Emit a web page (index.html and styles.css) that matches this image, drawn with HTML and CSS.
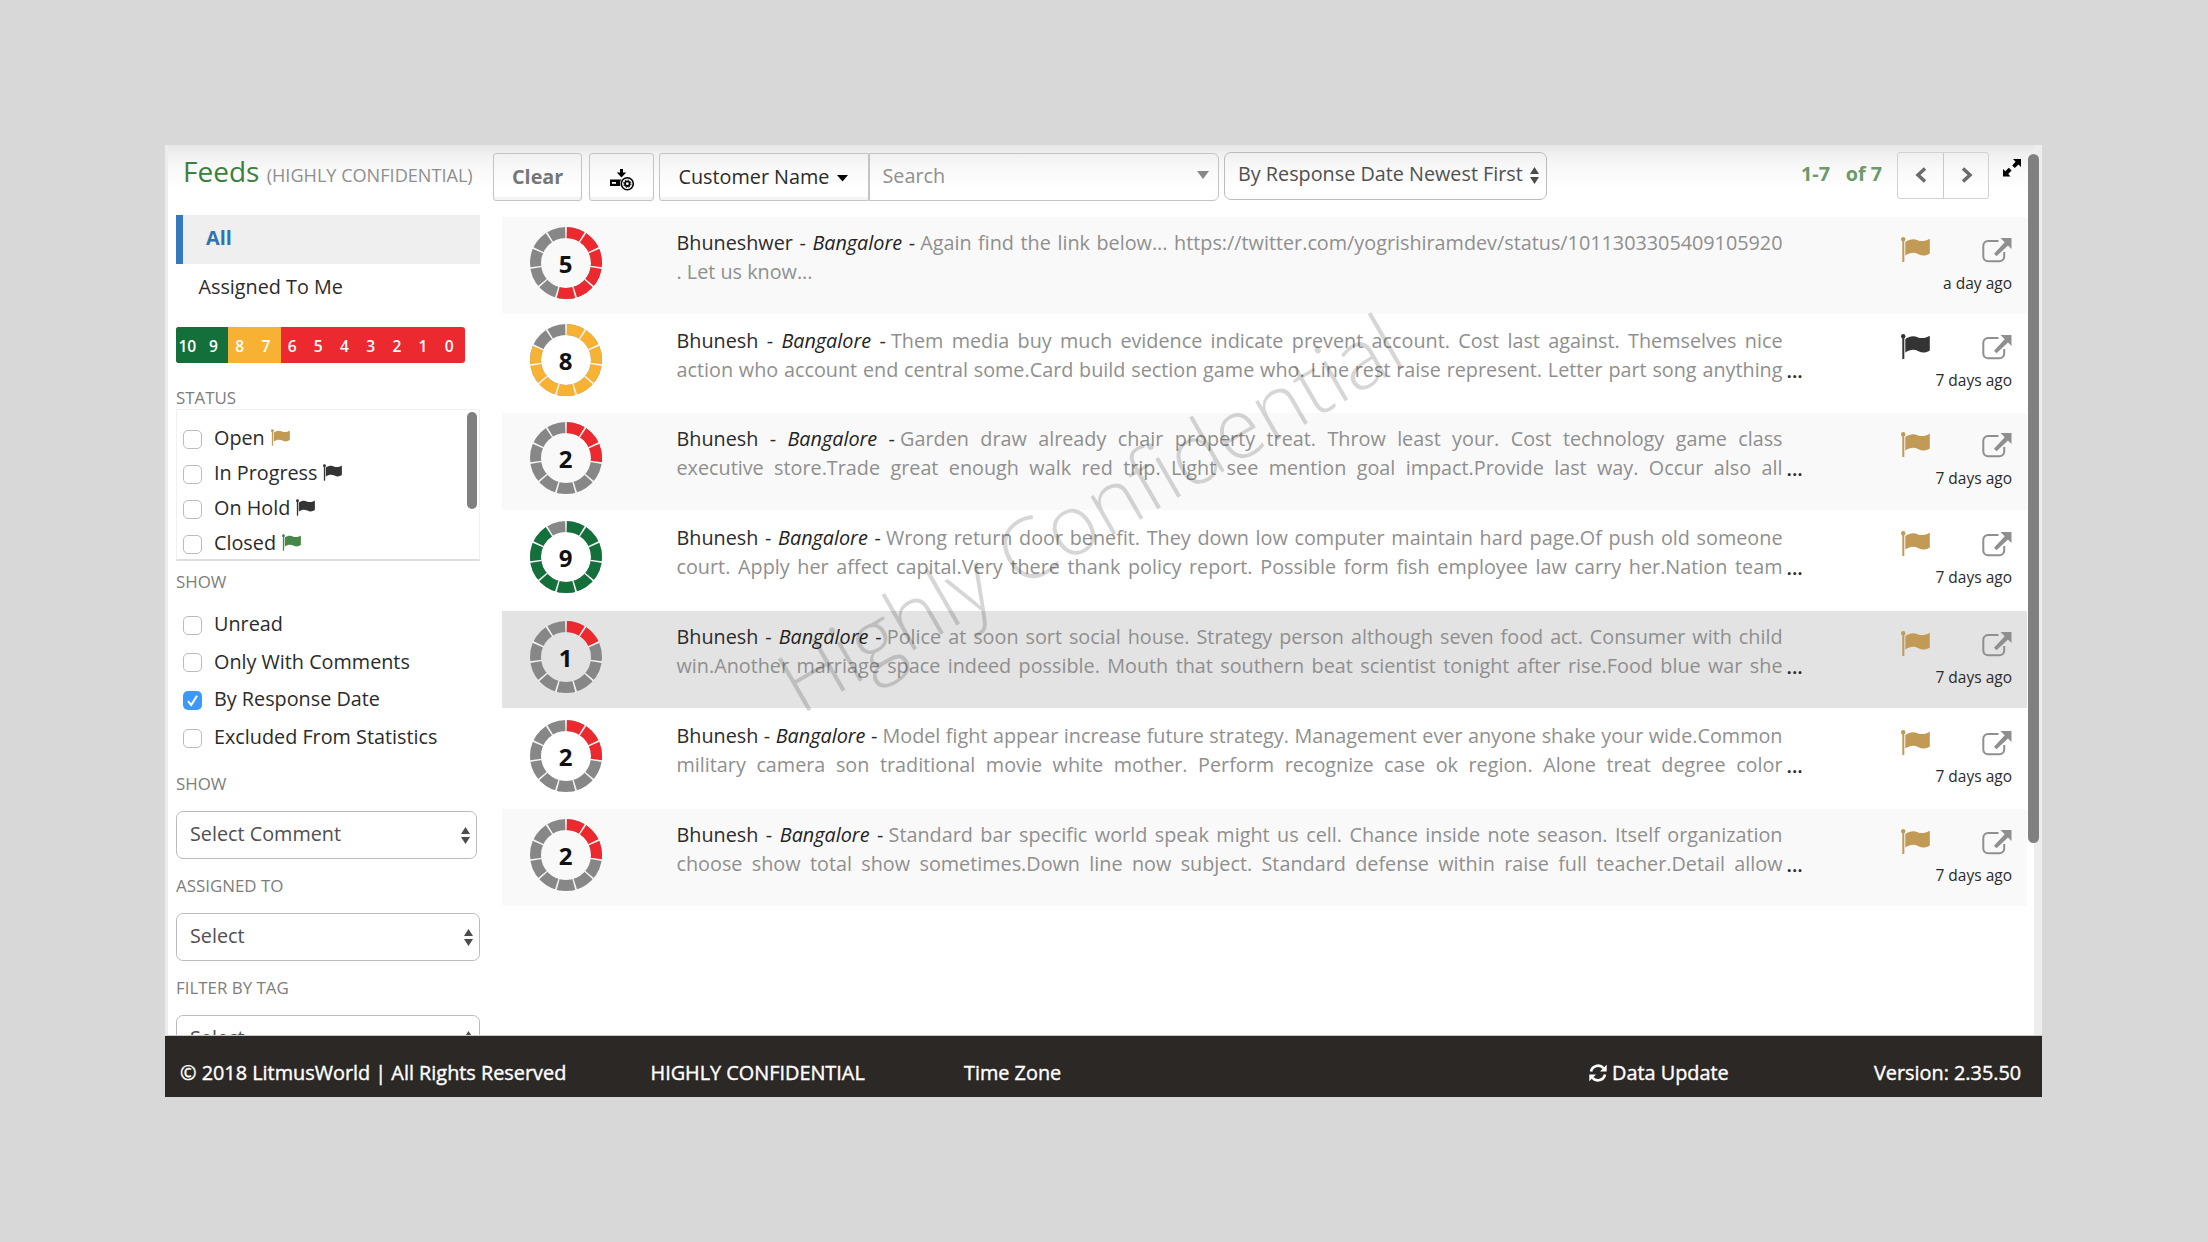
FILE: index.html
```
<!DOCTYPE html>
<html lang="en">
<head>
<meta charset="utf-8">
<title>Feeds</title>
<link rel="stylesheet" href="styles.css">
</head>
<body>
<svg class="defs" width="0" height="0">
  <symbol id="flag" viewBox="0 0 29 25">
    <circle cx="2.2" cy="2.2" r="2.2"/><rect x="1.3" y="2" width="2" height="23"/>
    <path d="M4.3 5C9 1.6 13 1.6 16.500 3.200C20.500 4.800 24.500 4.200 28.800 1.700V16.500C24.500 19.200 21 19 17.500 17.200C13 15 9 15.400 4.300 18.600Z"/>
  </symbol>
  <symbol id="open" viewBox="0 0 30 26">
    <path d="M16.500 4H6A4.700 4.700 0 0 0 1.300 8.700V19.500A4.700 4.700 0 0 0 6 24.200H17.500A4.700 4.700 0 0 0 22.200 19.500V15" fill="none" stroke="currentColor" stroke-width="2"/>
    <path d="M18.500 1H29.500V12L26 8.600L14.500 19.200L12 16.700L22.700 5.300Z"/>
  </symbol>
  <symbol id="updown" viewBox="0 0 9 17">
    <path d="M4.500 0L9 7H0ZM4.500 17L0 10H9Z"/>
  </symbol>
  <symbol id="ring" viewBox="0 0 72 72">
    <circle class="seg-gap" cx="36" cy="36" r="30.500" pathLength="11"/>
  </symbol>
</svg>

<div class="app">
  <div class="content">
    <aside class="sidebar">
      <h1 class="title">Feeds <small>(HIGHLY CONFIDENTIAL)</small></h1>
      <div class="nav-item active">All</div>
      <div class="nav-item">Assigned To Me</div>
      <div class="scores">
        <span class="green">10</span><span class="green">9</span><span class="amber">8</span><span class="amber">7</span><span>6</span><span>5</span><span>4</span><span>3</span><span>2</span><span>1</span><span>0</span>
      </div>

      <div class="label status-label">STATUS</div>
      <div class="status-box">
        <label class="check"><i class="box"></i><span>Open</span><svg class="flag-s tan"><use href="#flag"/></svg></label>
        <label class="check"><i class="box"></i><span>In Progress</span><svg class="flag-s dark"><use href="#flag"/></svg></label>
        <label class="check"><i class="box"></i><span>On Hold</span><svg class="flag-s dark"><use href="#flag"/></svg></label>
        <label class="check"><i class="box"></i><span>Closed</span><svg class="flag-s leaf"><use href="#flag"/></svg></label>
        <div class="status-thumb"></div>
      </div>

      <div class="label show-label">SHOW</div>
      <div class="show-list">
        <label class="check"><i class="box"></i><span>Unread</span></label>
        <label class="check"><i class="box"></i><span>Only With Comments</span></label>
        <label class="check"><i class="box on"><svg viewBox="0 0 19 19"><path d="M5 10.200L8.200 14L14 4.800" fill="none" stroke="#fff" stroke-width="2"/></svg></i><span>By Response Date</span></label>
        <label class="check"><i class="box"></i><span>Excluded From Statistics</span></label>
      </div>

      <div class="label">SHOW</div>
      <div class="select short">Select Comment<svg class="updown"><use href="#updown"/></svg></div>
      <div class="label">ASSIGNED TO</div>
      <div class="select">Select<svg class="updown"><use href="#updown"/></svg></div>
      <div class="label">FILTER BY TAG</div>
      <div class="select">Select<svg class="updown"><use href="#updown"/></svg></div>
    </aside>

    <main class="main">
      <div class="tools">
        <div class="btn clear">Clear</div>
        <div class="btn export">
          <svg width="25" height="22" viewBox="0 0 25 22">
            <path d="M10 0H13V3.500H16.200L11.500 8.500L6.800 3.500H10Z"/>
            <path d="M0 10.500H14V17H0Z"/>
            <rect x="2" y="13" width="4" height="1.800" fill="#fff"/>
            <circle cx="17.300" cy="14.700" r="7.400" fill="#fff"/>
            <circle cx="17.300" cy="14.700" r="6" fill="none" stroke="#000" stroke-width="1.600"/>
            <circle cx="17.300" cy="14.700" r="2.300" fill="none" stroke="#000" stroke-width="1.800"/>
            <circle cx="17.300" cy="14.700" r="3.700" fill="none" stroke="#000" stroke-width="1" stroke-dasharray="1.500 1.400"/>
          </svg>
        </div>
        <div class="btn field">Customer Name<svg width="11" height="7"><path d="M0 0H11L5.500 6.500Z"/></svg></div>
        <div class="search">Search<svg width="12" height="8"><path d="M0 0H12L6 8Z"/></svg></div>
        <div class="select sort">By Response Date Newest First<svg class="updown"><use href="#updown"/></svg></div>
        <div class="range"><span>1-7</span><span>of 7</span></div>
        <div class="pager">
          <span><svg width="12" height="16"><path d="M10 1.500L3 8L10 14.500"/></svg></span>
          <span><svg width="12" height="16"><path d="M2 1.500L9 8L2 14.500"/></svg></span>
        </div>
        <svg class="expand" width="20" height="20" viewBox="0 0 20 20">
          <path d="M11 1H19V9L16.500 6.500L12.800 10L10.200 7.400L13.600 3.700Z"/>
          <path d="M8.500 18.500H1V11L3.300 13.200L6.800 9.800L9.600 12.500L6.200 16.100Z"/>
        </svg>
      </div>

      <div class="list">
        <article class="row">
          <div class="score red"><svg><circle cx="36" cy="36" r="30.5"/><circle class="fill" cx="36" cy="36" r="30.5" pathLength="11" stroke-dasharray="6 11"/><use href="#ring"/></svg><b>5</b></div>
          <div class="text"><p>Bhuneshwer - <em>Bangalore</em> -<q class="lead">Again find the link below... https://twitter.com/yogrishiramdev/status/1011303305409105920</q></p><p class="end"><q>. Let us know...</q></p></div>
          <div class="meta"><div><svg class="flag tan"><use href="#flag"/></svg><svg class="open"><use href="#open"/></svg></div><time>a day ago</time></div>
        </article>
        <article class="row">
          <div class="score amber-ring"><svg><circle cx="36" cy="36" r="30.5"/><circle class="fill" cx="36" cy="36" r="30.5" pathLength="11" stroke-dasharray="9 11"/><use href="#ring"/></svg><b>8</b></div>
          <div class="text"><p>Bhunesh - <em>Bangalore</em> -<q class="lead">Them media buy much evidence indicate prevent account. Cost last against. Themselves nice</q></p><p><q>action who account end central some.Card build section game who. Line rest raise represent. Letter part song anything</q></p><span class="more">...</span></div>
          <div class="meta"><div><svg class="flag dark"><use href="#flag"/></svg><svg class="open"><use href="#open"/></svg></div><time>7 days ago</time></div>
        </article>
        <article class="row">
          <div class="score red"><svg><circle cx="36" cy="36" r="30.5"/><circle class="fill" cx="36" cy="36" r="30.5" pathLength="11" stroke-dasharray="3 11"/><use href="#ring"/></svg><b>2</b></div>
          <div class="text"><p>Bhunesh - <em>Bangalore</em> -<q class="lead">Garden draw already chair property treat. Throw least your. Cost technology game class</q></p><p><q>executive store.Trade great enough walk red trip. Light see mention goal impact.Provide last way. Occur also all</q></p><span class="more">...</span></div>
          <div class="meta"><div><svg class="flag tan"><use href="#flag"/></svg><svg class="open"><use href="#open"/></svg></div><time>7 days ago</time></div>
        </article>
        <article class="row">
          <div class="score green-ring"><svg><circle cx="36" cy="36" r="30.5"/><circle class="fill" cx="36" cy="36" r="30.5" pathLength="11" stroke-dasharray="10 11"/><use href="#ring"/></svg><b>9</b></div>
          <div class="text"><p>Bhunesh - <em>Bangalore</em> -<q class="lead">Wrong return door benefit. They down low computer maintain hard page.Of push old someone</q></p><p><q>court. Apply her affect capital.Very there thank policy report. Possible form fish employee law carry her.Nation team</q></p><span class="more">...</span></div>
          <div class="meta"><div><svg class="flag tan"><use href="#flag"/></svg><svg class="open"><use href="#open"/></svg></div><time>7 days ago</time></div>
        </article>
        <article class="row selected">
          <div class="score red"><svg><circle cx="36" cy="36" r="30.5"/><circle class="fill" cx="36" cy="36" r="30.5" pathLength="11" stroke-dasharray="2 11"/><use href="#ring"/></svg><b>1</b></div>
          <div class="text"><p>Bhunesh - <em>Bangalore</em> -<q class="lead">Police at soon sort social house. Strategy person although seven food act. Consumer with child</q></p><p><q>win.Another marriage space indeed possible. Mouth that southern beat scientist tonight after rise.Food blue war she</q></p><span class="more">...</span></div>
          <div class="meta"><div><svg class="flag tan"><use href="#flag"/></svg><svg class="open"><use href="#open"/></svg></div><time>7 days ago</time></div>
        </article>
        <article class="row">
          <div class="score red"><svg><circle cx="36" cy="36" r="30.5"/><circle class="fill" cx="36" cy="36" r="30.5" pathLength="11" stroke-dasharray="3 11"/><use href="#ring"/></svg><b>2</b></div>
          <div class="text"><p>Bhunesh - <em>Bangalore</em> -<q class="lead">Model fight appear increase future strategy. Management ever anyone shake your wide.Common</q></p><p><q>military camera son traditional movie white mother. Perform recognize case ok region. Alone treat degree color</q></p><span class="more">...</span></div>
          <div class="meta"><div><svg class="flag tan"><use href="#flag"/></svg><svg class="open"><use href="#open"/></svg></div><time>7 days ago</time></div>
        </article>
        <article class="row">
          <div class="score red"><svg><circle cx="36" cy="36" r="30.5"/><circle class="fill" cx="36" cy="36" r="30.5" pathLength="11" stroke-dasharray="3 11"/><use href="#ring"/></svg><b>2</b></div>
          <div class="text"><p>Bhunesh - <em>Bangalore</em> -<q class="lead">Standard bar specific world speak might us cell. Chance inside note season. Itself organization</q></p><p><q>choose show total show sometimes.Down line now subject. Standard defense within raise full teacher.Detail allow</q></p><span class="more">...</span></div>
          <div class="meta"><div><svg class="flag tan"><use href="#flag"/></svg><svg class="open"><use href="#open"/></svg></div><time>7 days ago</time></div>
        </article>
      </div>
    </main>
    <div class="track"></div>
    <div class="thumb"></div>
    <div class="watermark">Highly Confidential</div>
  </div>

  <footer class="footer">
    <span class="copy">© 2018 LitmusWorld | All Rights Reserved</span>
    <span class="secret">HIGHLY CONFIDENTIAL</span>
    <span class="zone">Time Zone</span>
    <span class="update"><svg width="18" height="18" viewBox="0 0 18 18"><path d="M2 7.500A7.200 7.200 0 0 1 14.500 4.200M16 10.500A7.200 7.200 0 0 1 3.500 13.800" fill="none" stroke="#fff" stroke-width="2.700"/><path d="M17.700 .8V7.500H11ZM.3 17.200V10.500H7Z" fill="#fff"/></svg>Data Update</span>
    <span class="version">Version: 2.35.50</span>
  </footer>
</div>
</body>
</html>
```

FILE: styles.css
```
* { box-sizing: border-box; }
body {
  margin: 0;
  padding: 145px 0 0 165px;
  height: 1242px;
  overflow: hidden;
  background: #d8d8d8;
  font: 19.8px "Open Sans", "Noto Sans", sans-serif;
  color: #2b2b2b;
}
.defs { position: absolute; }
.app { width: 1877px; height: 952px; display: flex; flex-direction: column; }
.content {
  position: relative;
  height: 891px;
  display: flex;
  overflow: hidden;
  border-left: 3px solid #ececec;
  border-bottom: 1px solid #c4cac8;
  background: linear-gradient(#e6e6e6, #f1f1f1 10px, #fafafa 26px, #fff 46px);
}

/* Sidebar */
.sidebar { width: 312px; padding-left: 8px; flex: none; }
.title {
  margin: 0; padding: 6px 0 0 7px; height: 70px;
  font-size: 28px; font-weight: 400; line-height: 40px; color: #3c803d; white-space: nowrap;
}
.title small { font-size: 18.1px; color: #8f8f8f; }
.nav-item { height: 62.5px; padding: 9px 0 0 22.500px; line-height: 27px; }
.nav-item.active {
  height: 49px; padding: 9px 0 0 23px;
  border-left: 7px solid #3478c0; background: #efefef;
  font-weight: 700; color: #3073b1;
}
.scores {
  display: flex; width: 289px; height: 36px; border-radius: 3px; overflow: hidden;
  background: #eb292f; color: #fff; font-size: 15.6px; font-weight: 600; line-height: 38px;
}
.scores span { width: 26.2px; padding-right: 3.500px; text-align: center; flex: none; }
.scores .green { background: #14703b; }
.scores .amber { background: #f8b233; }
.label { margin-top: 16px; line-height: 22px; font-size: 16.900px; color: #7d7d7d; }
.status-label { margin-top: 24px; }
.show-label { margin-top: 10px; }
.status-box {
  position: relative; height: 152.500px; padding: 12px 0 0 7px; overflow: hidden;
  border: 1px solid #f0f0f0; border-bottom: 2px solid #dedede;
}
.status-thumb {
  position: absolute; top: 2px; right: 2px; width: 10.500px; height: 97.500px;
  border-radius: 5px; background: #808080;
}
.check { display: flex; align-items: center; height: 35px; }
.status-box .check { margin-left: -1px; }
.check span { margin-left: 12px; padding-bottom: 3px; }
.box {
  width: 19px; height: 19px; flex: none; border: 1px solid #bbb; border-radius: 5px; background: #fff;
}
.box.on { border: 0; background: #3c99fc; }
.box svg { display: block; }
.flag-s { width: 19px; height: 17px; margin: -3px 0 0 6px; }
.show-list { padding: 13.500px 0 0 7px; }
.show-list .check { height: 37.600px; }
.tan { fill: #c19a56; }
.dark { fill: #343434; }
.leaf { fill: #468847; }
.select {
  position: relative; height: 48px; margin-top: 16px; padding-left: 13px;
  border: 1px solid #bcbcbc; border-radius: 7px; line-height: 43px; color: #505050; white-space: nowrap;
}
.select.short { width: 301px; }
.updown { position: absolute; right: 6px; top: 15px; width: 9px; height: 17px; fill: #4c4c4c; }

/* Toolbar */
.main { width: 1546px; margin-left: 13px; }
.tools { display: flex; height: 72px; padding-top: 8px; }
.btn {
  height: 48px; border: 1px solid #c4c4c4; border-radius: 3px; line-height: 46px;
  box-shadow: inset 0 -3px 0 #f4f4f4;
}
.clear { width: 89px; padding-left: 18px; font-weight: 700; color: #777; }
.export { width: 65px; margin-left: 7px; padding: 15px 0 0 20px; line-height: 0; }
.field { width: 210px; margin-left: 5px; padding-left: 18.500px; border-radius: 3px 0 0 3px; white-space: nowrap; }
.field svg { margin: 0 0 2px 8px; }
.search {
  position: relative; width: 350px; height: 48px; padding-left: 12.500px; line-height: 43px; color: #8f8f8f;
  border: 1px solid #c4c4c4; border-radius: 0 6px 6px 0;
}
.search svg { position: absolute; right: 9px; top: 17px; fill: #888; }
.sort { width: 323px; margin: -1.500px 0 0 5px; padding-left: 13px; line-height: 42px; }
.sort .updown { top: 14px; right: 7px; }
.range {
  display: flex; justify-content: space-between; width: 81px; margin-left: 254px; line-height: 41px;
  font-weight: 700; color: #6b9a6c; white-space: nowrap;
}
.pager {
  display: flex; width: 92px; height: 47px; margin: -1.500px 0 0 15px;
  border: 1px solid #d2d2d2; border-radius: 3px;
}
.pager span { width: 45px; padding: 14px 0 0 16.500px; line-height: 0; }
.pager span + span { border-left: 1px solid #c8c8c8; }
.pager path { fill: none; stroke: #6b6b6b; stroke-width: 3.500; }
.expand { margin: 5px 0 0 13px; }

/* Feed list */
.list {
  display: grid; grid-template-rows: 97.500px 98px 99px 99.500px 99px 99px 99px;
  width: 1525px; margin-left: 8.500px;
}
.row { display: flex; height: 97px; }
.row:nth-child(odd) { background: #f9f9f9; }
.row.selected { background: #e3e3e3; }
.score { position: relative; width: 72px; height: 72px; margin: 9.500px 0 0 28px; }
.score svg { width: 72px; height: 72px; display: block; transform: rotate(-90deg); }
.score circle { fill: none; stroke: #878787; stroke-width: 11; }
.score .fill { stroke: #eb292f; }
.amber-ring .fill { stroke: #f8b233; }
.green-ring .fill { stroke: #14703b; }
.seg-gap { stroke-width: 12; stroke-dasharray: .09 .91; stroke-dashoffset: .045; }
.score .seg-gap, .seg-gap { fill: none; stroke: #f3f3f3; }
.score b {
  position: absolute; left: 0; top: 19px; width: 72px; text-align: center;
  font-size: 24px; line-height: 36px; color: #111;
}
.text { position: relative; width: 1106px; margin: 11px 0 0 75px; line-height: 29px; }
.text p { margin: 0; height: 29px; text-align-last: justify; }
.text .end { text-align-last: left; }
.text q { quotes: none; color: #8f8f8f; }
.text q::before, .text q::after { content: none; }
.text .lead { margin-left: .26em; }
.text em { color: #222; }
.more { position: absolute; left: 1110px; top: 30px; font-weight: 600; }
.meta { width: 111.500px; margin: 19.500px 0 0 118px; }
.meta div { display: flex; justify-content: space-between; height: 26px; }
.flag { width: 29px; height: 25px; }
.open { width: 30px; height: 26px; fill: #8f8f8f; color: #8f8f8f; }
.meta time { display: block; margin-top: 10px; text-align: right; font-size: 15.500px; line-height: 21px; }

.track { position: absolute; right: 0; top: 0; width: 8px; height: 891px; background: #ededed; }
.thumb { position: absolute; right: 3px; top: 9px; width: 11px; height: 689px; border-radius: 5.500px; background: #808080; }
.watermark {
  position: absolute; left: 541px; top: 308px; width: 760px; height: 118px; line-height: 118px;
  text-align: center; white-space: nowrap; font-size: 84px; font-weight: 300;
  color: rgba(0, 0, 0, .16); transform: rotate(-30deg);
}

/* Footer */
.footer {
  position: relative; display: flex; height: 61px; padding-top: 16px; line-height: 41px;
  background: #2c2826; color: #fff; font-size: 19.850px; -webkit-text-stroke: .4px #fff; white-space: nowrap;
}
.copy { width: 471px; padding-left: 15px; margin-right: 14.500px; }
.secret { width: 313.500px; }
.zone { width: 625px; }
.update { width: 285px; }
.update svg { margin: 0 5px -2px 0; }
```
